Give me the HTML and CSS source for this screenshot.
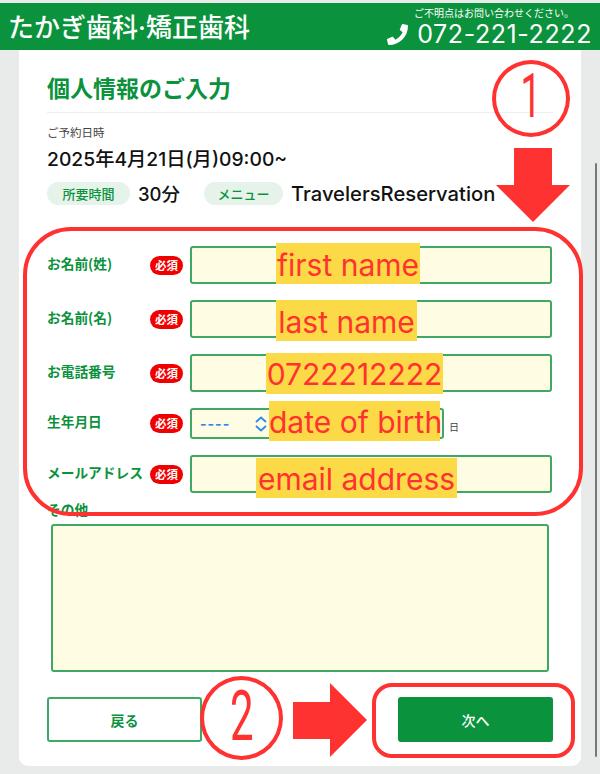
FILE: index.html
```html
<!DOCTYPE html>
<html lang="ja">
<head>
<meta charset="utf-8">
<title>個人情報のご入力</title>
<link rel="stylesheet" href="styles.css">
</head>
<body>
<div class="page">
  <header class="site-header">
    <div class="brand">たかぎ歯科<span class="brand-dot">·</span>矯正歯科</div>
    <div class="contact">
      <div class="contact-note">ご不明点はお問い合わせください。</div>
      <div class="contact-tel">
        <svg class="tel-icon" viewBox="0 0 512 512"><path fill="#fff" d="M493.4 24.6l-104-24c-11.3-2.6-22.9 3.3-27.5 13.9l-48 112c-4.2 9.8-1.4 21.3 6.9 28l60.6 49.6c-36 76.7-98.9 140.5-177.2 177.2l-49.6-60.6c-6.8-8.3-18.2-11.1-28-6.9l-112 48C3.9 366.5-2 378.1.6 389.4l24 104C27.1 504.2 36.7 512 48 512c256.1 0 464-207.5 464-464 0-11.2-7.7-20.9-18.6-23.4z"/></svg>
        <span>072-221-2222</span>
      </div>
    </div>
  </header>

  <main class="card">
    <h1 class="title">個人情報のご入力</h1>
    <div class="summary-label">ご予約日時</div>
    <div class="summary-date">2025年4月21日(月)09:00~</div>
    <div class="chips">
      <span class="chip chip-time">所要時間</span>
      <span class="chip-value chip-value-time">30分</span>
      <span class="chip chip-menu">メニュー</span>
      <span class="chip-value">TravelersReservation</span>
    </div>

    <form class="fields">
      <div class="row">
        <label class="label">お名前(姓)</label><span class="req">必須</span>
        <input class="input" type="text">
      </div>
      <div class="row">
        <label class="label">お名前(名)</label><span class="req">必須</span>
        <input class="input" type="text">
      </div>
      <div class="row">
        <label class="label">お電話番号</label><span class="req">必須</span>
        <input class="input" type="text">
      </div>
      <div class="row row-date">
        <label class="label">生年月日</label><span class="req">必須</span>
        <div class="date-wrap">
          <div class="select">
            <span class="select-value">----</span>
            <svg class="chevrons" viewBox="0 0 14 16"><path d="M2 6 7 1.500 12 6M2 10l5 4.500L12 10" fill="none" stroke="#2f86f0" stroke-width="1.800"/></svg>
          </div>
          <span class="day">日</span>
        </div>
      </div>
      <div class="row">
        <label class="label">メールアドレス</label><span class="req">必須</span>
        <input class="input" type="text">
      </div>
      <label class="label label-other">その他</label>
      <textarea class="textarea"></textarea>
      <div class="actions">
        <button type="button" class="btn btn-back">戻る</button>
        <button type="button" class="btn btn-next">次へ</button>
      </div>
    </form>
  </main>

  <div class="scrollbar"></div>

  <div class="note note-first">first name</div>
  <div class="note note-last">last name</div>
  <div class="note note-tel">0722212222</div>
  <div class="note note-birth">date of birth</div>
  <div class="note note-mail">email address</div>

  <div class="frame frame-fields"></div>
  <div class="frame frame-next"></div>

  <div class="step step-one"><span class="digit">1</span></div>
  <div class="step step-two"><span class="digit">2</span></div>

  <svg class="arrow arrow-down" viewBox="0 0 74 74"><path fill="#ff3232" d="M18 0h38v37h18L37 74 0 37h18z"/></svg>
  <svg class="arrow arrow-right" viewBox="0 0 74 74"><path fill="#ff3232" d="M0 19h37V0l37 37-37 37V56H0z"/></svg>
</div>
</body>
</html>
```
FILE: styles.css
```css
* { box-sizing: border-box; }
html, body { margin: 0; padding: 0; }
body {
  font-family: Inter, "Noto Sans CJK JP", sans-serif;
  color: #111;
  background: #e9ebea;
}
.page {
  position: relative;
  width: 600px;
  height: 774px;
  overflow: hidden;
  background: #e9ebea;
  padding-top: 3px;
}
.site-header {
  height: 47px;
  background: #0b923c;
  color: #fff;
  display: flex;
  justify-content: space-between;
  align-items: flex-start;
  padding: 0 8px;
}
.brand {
  font-family: "Noto Sans CJK JP", sans-serif;
  font-size: 26px;
  font-weight: 500;
  line-height: 50px;
  margin-top: -2px;
  white-space: nowrap;
}
.brand-dot { font-family: Inter, sans-serif; }
.contact { display: flex; flex-direction: column; align-items: flex-end; }
.contact-note {
  font-family: "Noto Sans CJK JP", sans-serif;
  font-size: 10px;
  line-height: 12px;
  margin: 4px 18px 0 0;
}
.contact-tel {
  display: flex;
  align-items: center;
  gap: 9px;
  font-size: 25px;
  line-height: 28px;
  letter-spacing: 0.6px;
  margin-top: 1px;
}
.tel-icon { width: 21px; height: 21px; }

.card {
  width: 562px;
  height: 716px;
  margin-left: 19px;
  background: #fff;
  border-radius: 0 0 9px 9px;
  padding: 0 28px;
}
.title {
  margin: 0;
  height: 63px;
  border-bottom: 1px solid #eeeeee;
  padding-top: 19px;
  font-family: "Noto Sans CJK JP", sans-serif;
  font-size: 23px;
  line-height: 36px;
  font-weight: 700;
  color: #0b923c;
}
.summary-label {
  font-family: "Noto Sans CJK JP", sans-serif;
  font-size: 11.5px;
  line-height: 16px;
  color: #444;
  margin-top: 11px;
}
.summary-date {
  font-size: 19.3px;
  font-weight: 500;
  line-height: 24px;
  margin-top: 7px;
  white-space: nowrap;
}
.chips {
  display: flex;
  align-items: center;
  margin-top: 10px;
  height: 24px;
}
.chip {
  height: 23px;
  border-radius: 12px;
  background: #e5f3eb;
  color: #0b923c;
  font-family: "Noto Sans CJK JP", sans-serif;
  font-size: 13px;
  line-height: 23px;
  font-weight: 500;
  text-align: center;
}
.chip-time { width: 83px; margin-right: 8px; }
.chip-menu { width: 79px; margin-right: 8px; }
.chip-value { font-size: 20.2px; font-weight: 500; white-space: nowrap; }
.chip-value-time { width: 66px; font-size: 18.500px; }

.fields { margin-top: 41px; }
.row {
  display: flex;
  align-items: center;
  height: 38px;
  margin-bottom: 16px;
}
.row-date { height: 31px; }
.label {
  width: 103px;
  flex: none;
  font-family: "Noto Sans CJK JP", sans-serif;
  font-size: 13.7px;
  font-weight: 700;
  line-height: 18px;
  color: #0b923c;
  white-space: nowrap;
  margin-top: -5px;
}
.req {
  flex: none;
  width: 33px;
  height: 19px;
  margin-right: 7px;
  border-radius: 10px;
  background: #f00000;
  color: #fff;
  font-family: "Noto Sans CJK JP", sans-serif;
  font-size: 11.5px;
  font-weight: 700;
  line-height: 19px;
  text-align: center;
}
.input {
  flex: none;
  width: 362px;
  height: 38px;
  border: 2px solid #3fa863;
  border-radius: 3px;
  background: #fefde3;
  outline: none;
}
.date-wrap { display: flex; align-items: center; }
.select {
  width: 254px;
  height: 31px;
  border: 2px solid #3fa863;
  border-radius: 3px;
  background: #fefde3;
  display: flex;
  align-items: center;
  padding-left: 8px;
}
.select-value { color: #2f86f0; font-size: 14px; letter-spacing: 1px; font-weight: 700; }
.chevrons { width: 14px; height: 16px; margin-left: 24px; }
.day {
  font-family: "Noto Sans CJK JP", sans-serif;
  font-size: 10px;
  color: #444;
  margin: 5px 0 0 5px;
}
.label-other {
  display: block;
  margin-top: -9px;
  line-height: 18px;
  height: 14px;
}
.textarea {
  display: block;
  width: 498px;
  height: 148px;
  margin: 10px 0 0 4px;
  border: 2px solid #3fa863;
  border-radius: 3px;
  background: #fefde3;
  outline: none;
  resize: none;
}
.actions {
  display: flex;
  justify-content: space-between;
  margin-top: 25px;
}
.btn {
  width: 155px;
  height: 45px;
  border-radius: 3px;
  font-family: "Noto Sans CJK JP", sans-serif;
  font-size: 14px;
  font-weight: 700;
  padding: 0;
}
.btn-back { background: #fff; border: 2px solid #3fa863; color: #0b923c; }
.btn-next { background: #0b923c; border: 0; color: #fff; font-weight: 500; }

.scrollbar {
  position: absolute;
  left: 595px;
  top: 163px;
  width: 2px;
  height: 594px;
  background: #777;
  border-radius: 1px;
}

.note {
  position: absolute;
  background: #fcd947;
  color: #ff3232;
  font-size: 30px;
  text-align: center;
  white-space: nowrap;
}
.note-first { left: 276px; top: 243px; width: 144px; height: 41px; line-height: 44px; }
.note-last  { left: 276px; top: 300px; width: 141px; height: 41px; line-height: 44px; }
.note-tel   { left: 266px; top: 353px; width: 177px; height: 41px; line-height: 42px; }
.note-birth { left: 269px; top: 401px; width: 171px; height: 40px; line-height: 42px; }
.note-mail  { left: 256px; top: 458px; width: 201px; height: 40px; line-height: 42px; }

.frame { position: absolute; border: 4px solid #ff3232; }
.frame-fields { left: 23px; top: 227px; width: 560px; height: 289px; border-radius: 48px; }
.frame-next { left: 372px; top: 683px; width: 203px; height: 75px; border-radius: 20px; }

.step {
  position: absolute;
  border: 4px solid #ff3232;
  border-radius: 50%;
  color: #ff3232;
  font-family: Roboto, sans-serif;
  font-weight: 400;
  text-align: center;
}
.digit { display: inline-block; transform: scale(0.7, 1.16); }
.step-one { left: 492px; top: 60px; width: 78px; height: 77px; font-size: 52px; line-height: 66px; }
.step-two { left: 200px; top: 676px; width: 83px; height: 84px; font-size: 60px; line-height: 74px; }

.arrow { position: absolute; width: 74px; height: 74px; }
.arrow-down { left: 496px; top: 148px; }
.arrow-right { left: 293px; top: 683px; }
```
